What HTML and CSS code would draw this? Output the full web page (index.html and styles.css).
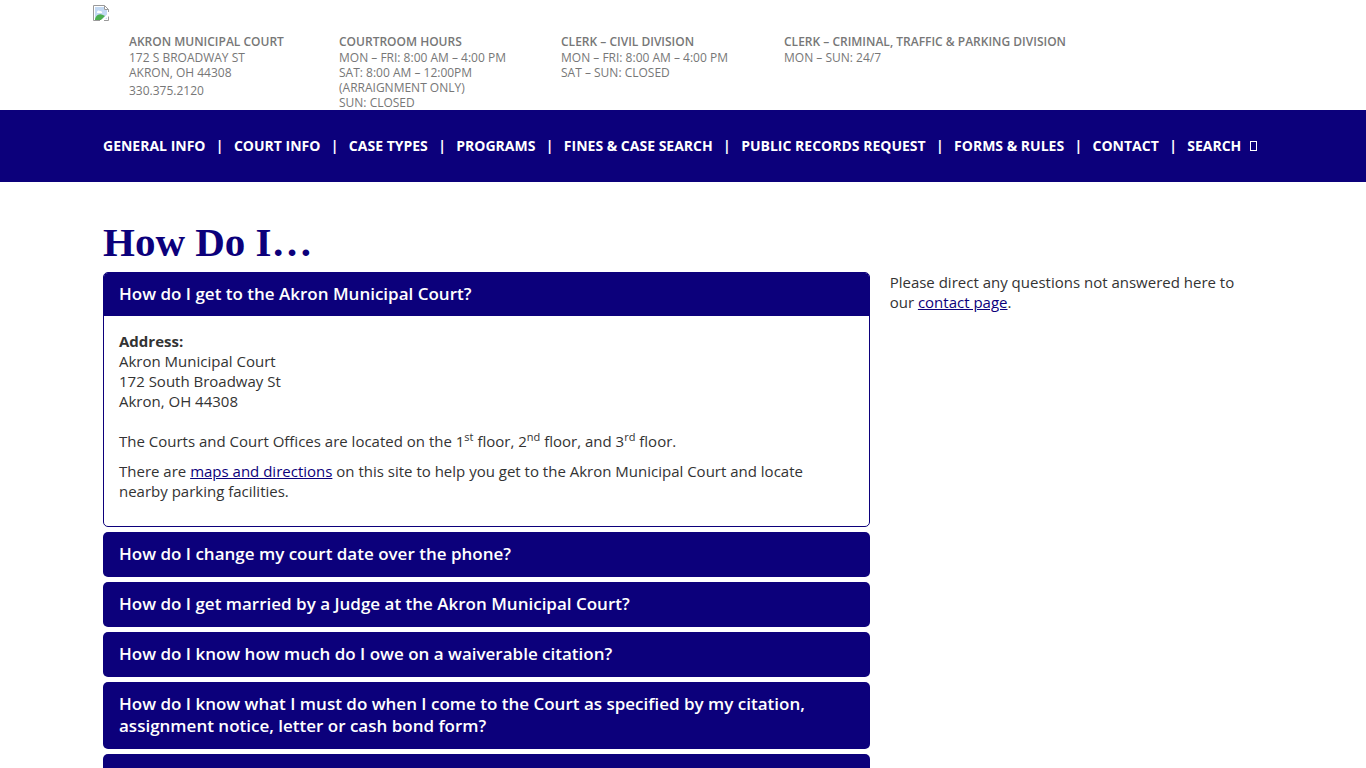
FILE: index.html
```
<!DOCTYPE html>
<html lang="en">
<head>
    <meta charset="UTF-8">
    <meta name="viewport" content="width=device-width, initial-scale=1.0">
    <title>How Do I... - Akron Municipal Court</title>
    <link rel="stylesheet" href="styles.css">
</head>
<body>
    <header class="site-header">
        <a class="logo" href="#" aria-label="Home">
            <svg width="16" height="16" viewBox="0 0 16 16">
                <path d="M0.5 0.5H11.5L15.5 4.5V15.5H0.5Z" fill="#fff"/>
                <path d="M2 2H11V5H14V14H2Z" fill="#c3d9f3"/>
                <path d="M4 7c0-1.500 2-2 2.800-1 1.500-.5 2.700.7 2.200 2H4z" fill="#fff"/>
                <path d="M2 15c0-4 4-7.500 8-5l2 1-4 4z" fill="#4caf50"/>
                <path d="M16 7.500L7.500 16H10L16 10.500z" fill="#fff"/>
                <path d="M15.500 7V4.500L11.500 .5H.5V15.500H7M11.500 .5V4.500H15.500M11 15.500H15.500V11.500" fill="none" stroke="#9a9a9a"/>
            </svg>
        </a>
        <div class="header-info">
            <div>
                <h2>Akron Municipal Court</h2>
                <p>172 S Broadway St<br>Akron, OH 44308</p>
                <p class="phone">330.375.2120</p>
            </div>
            <div>
                <h2>Courtroom Hours</h2>
                <p>Mon – Fri: 8:00 AM – 4:00 PM<br>Sat: 8:00 AM – 12:00PM<br>(Arraignment Only)<br>Sun: Closed</p>
            </div>
            <div>
                <h2>Clerk – Civil Division</h2>
                <p>Mon – Fri: 8:00 AM – 4:00 PM<br>Sat – Sun: Closed</p>
            </div>
            <div>
                <h2>Clerk – Criminal, Traffic &amp; Parking Division</h2>
                <p>Mon – Sun: 24/7</p>
            </div>
        </div>
    </header>

    <nav class="main-nav">
        <ul>
            <li><a href="#">General Info</a></li>
            <li><a href="#">Court Info</a></li>
            <li><a href="#">Case Types</a></li>
            <li><a href="#">Programs</a></li>
            <li><a href="#">Fines &amp; Case Search</a></li>
            <li><a href="#">Public Records Request</a></li>
            <li><a href="#">Forms &amp; Rules</a></li>
            <li><a href="#">Contact</a></li>
            <li><a href="#">Search <span class="search-icon"></span></a></li>
        </ul>
    </nav>

    <main class="content">
        <h1>How Do I…</h1>
        <div class="columns">
            <div class="accordion">
                <section class="item open">
                    <h3><button type="button" aria-expanded="true">How do I get to the Akron Municipal Court?</button></h3>
                    <div class="panel">
                        <p><strong>Address:</strong><br>Akron Municipal Court<br>172 South Broadway St<br>Akron, OH 44308</p>
                        <p class="floors">The Courts and Court Offices are located on the 1<sup>st</sup> floor, 2<sup>nd</sup> floor, and 3<sup>rd</sup> floor.</p>
                        <p>There are <a href="#">maps and directions</a> on this site to help you get to the Akron Municipal Court and locate nearby parking facilities.</p>
                    </div>
                </section>
                <section class="item">
                    <h3><button type="button" aria-expanded="false">How do I change my court date over the phone?</button></h3>
                </section>
                <section class="item">
                    <h3><button type="button" aria-expanded="false">How do I get married by a Judge at the Akron Municipal Court?</button></h3>
                </section>
                <section class="item">
                    <h3><button type="button" aria-expanded="false">How do I know how much do I owe on a waiverable citation?</button></h3>
                </section>
                <section class="item">
                    <h3><button type="button" aria-expanded="false">How do I know what I must do when I come to the Court as specified by my citation, assignment notice, letter or cash bond form?</button></h3>
                </section>
                <section class="item">
                    <h3><button type="button" aria-expanded="false" aria-label="More questions"></button></h3>
                </section>
            </div>
            <aside class="sidebar">
                <p>Please direct any questions not answered here to our <a href="#">contact page</a>.</p>
            </aside>
        </div>
    </main>
</body>
</html>
```
FILE: styles.css
```
/* General */
* { box-sizing: border-box; }
body { margin: 0; background-color: #fff; color: #333; font-family: "Segoe UI", "Open Sans", sans-serif; font-size: 15px; line-height: 20px; }
h1, h2, h3, p, ul { margin: 0; padding: 0; }
a { color: #0c007b; }

/* Header */
.site-header { max-width: 1180px; height: 110px; margin: 0 auto; padding-top: 5px; }
.logo { display: block; width: 16px; height: 16px; }
.logo svg { display: block; }
.header-info { display: grid; grid-template-columns: 210px 222px 223px auto; padding: 13px 0 0 36px; color: #777; font-size: 12px; line-height: 15px; text-transform: uppercase; }
.header-info h2 { font-size: 12px; font-weight: 600; line-height: 16px; }
.header-info .phone { margin-top: 3px; }

/* Navigation */
.main-nav { background-color: #0c007b; }
.main-nav ul { display: flex; justify-content: space-between; max-width: 1180px; margin: 0 auto; padding: 26px 16px 26px 10px; list-style: none; }
.main-nav li { display: contents; color: #fff; font-size: 14px; font-weight: 700; }
.main-nav li + li::before { content: "|"; }
.main-nav a { color: #fff; text-decoration: none; text-transform: uppercase; white-space: nowrap; }
.search-icon { display: inline-block; width: 7px; height: 10px; margin-left: 5px; border: 1px solid #fff; }

/* Content */
.content { max-width: 1180px; margin: 0 auto; padding-top: 36px; }
h1 { padding: 0 10px; color: #0c007b; font-family: Georgia, "Liberation Serif", serif; font-size: 41px; font-weight: 700; line-height: 48px; }
.columns { display: grid; grid-template-columns: 2fr 1fr; margin-top: 6px; }
.accordion, .sidebar { padding: 0 10px; }
.sidebar { padding-right: 30px; }

/* Accordion */
.item { margin-bottom: 5px; border-radius: 5px; overflow: hidden; }
.item.open { border: 1px solid #0c007b; }
.item button { display: block; width: 100%; min-height: 45px; padding: 11px 16px 12px; border: 0; background-color: #0c007b; color: #fff; font-family: inherit; font-size: 17px; font-weight: 600; line-height: 22px; text-align: left; cursor: pointer; }
.item.open button { min-height: 43px; padding: 10px 15px 11px; }
.panel { padding: 15px 15px 25px; }
.panel p + p { margin-top: 10px; }
.panel p.floors { margin-top: 20px; }
.panel sup { font-size: 11px; line-height: 0; }
```
